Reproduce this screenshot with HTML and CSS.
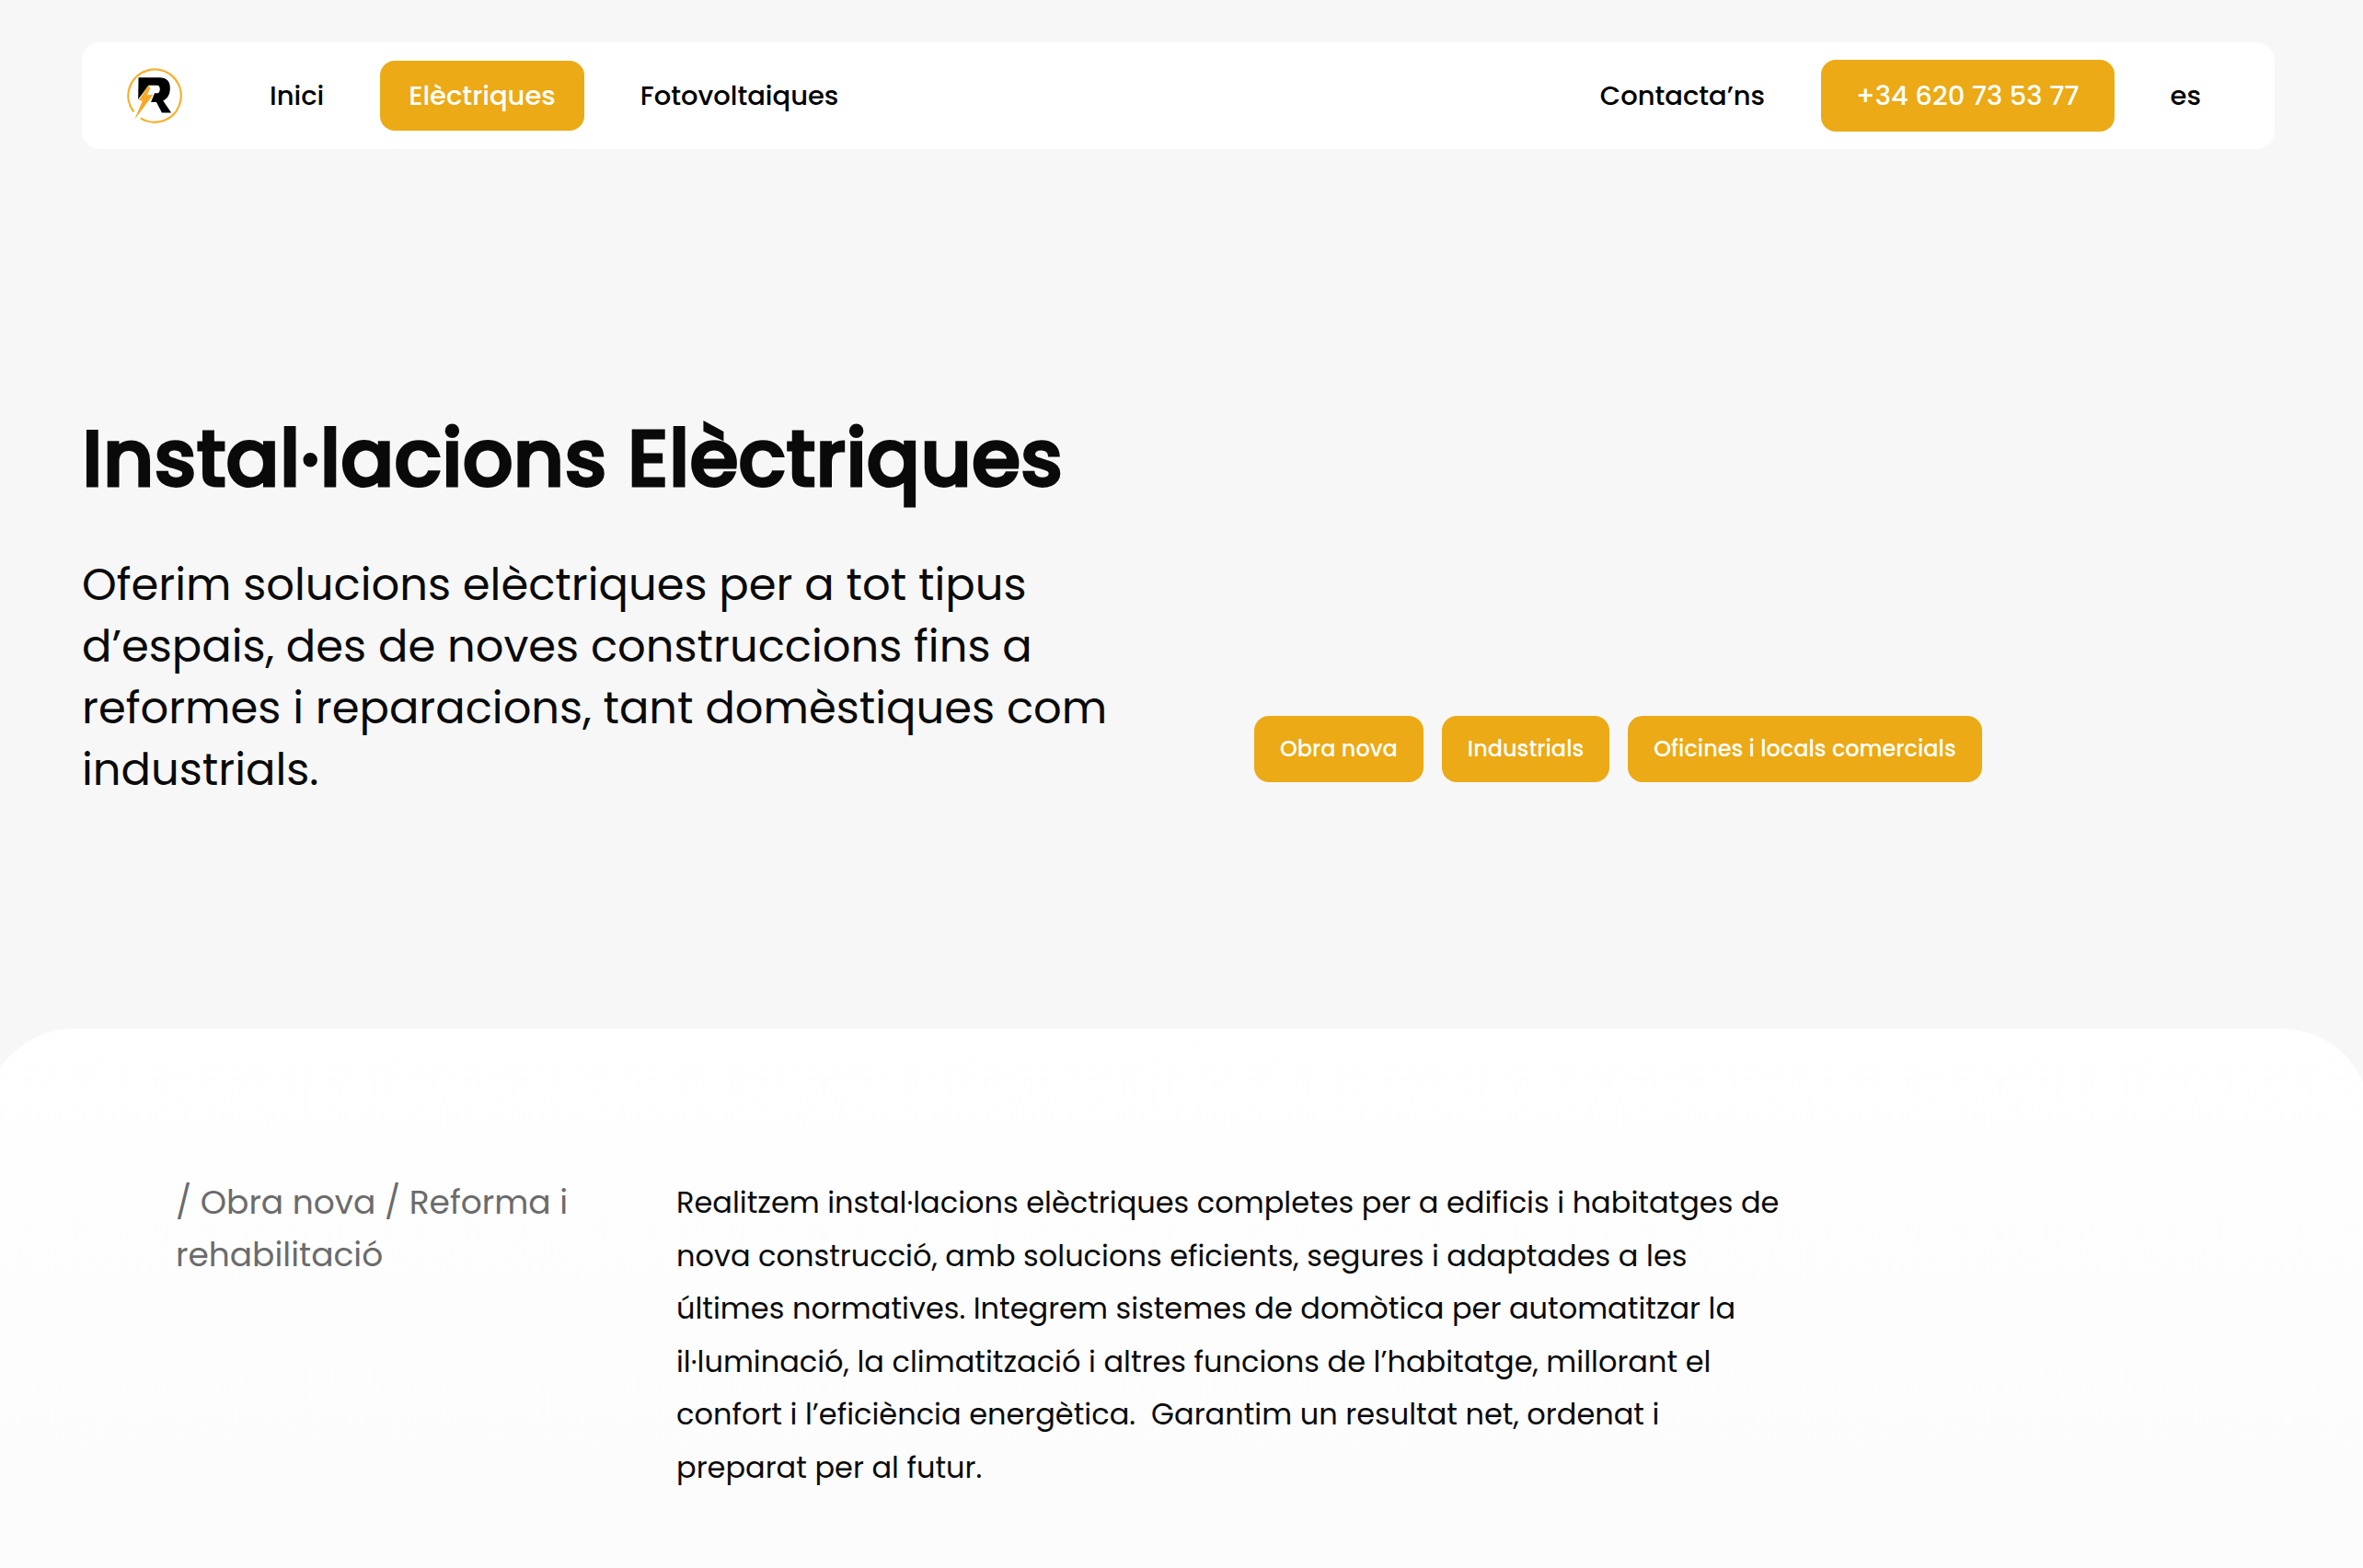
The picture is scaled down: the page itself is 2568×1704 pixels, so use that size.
FILE: index.html
```html
<!DOCTYPE html>
<html lang="ca">
<head>
  <meta charset="UTF-8">
  <meta name="viewport" content="width=device-width, initial-scale=1.0">
  <title>Instal·lacions Elèctriques</title>
  <link rel="stylesheet" href="styles.css">
</head>
<body>

<header class="navbar">
  <a class="logo" href="#" aria-label="Inici">
    <svg viewBox="50 38 188 188" aria-hidden="true">
      <path d="M75 185 A87 87 0 1 1 98 206" fill="none" stroke="#f9b02c" stroke-width="7"/>
      <path d="M91 72 H160 C184 72 195 84 195 106 C195 128 187 141 172 149 L199 188 H168 L150 153 H132 L144 124 H154 C163 124 166 98 152 98 H124 L90 144 Z" fill="#000"/>
      <path d="M124 98 L92 147 L104 149 L78 211 L139 129 L119 130 L130 108 Z" fill="#f9a825"/>
    </svg>
  </a>
  <nav class="nav-links">
    <a href="#">Inici</a>
    <a class="active" href="#">Elèctriques</a>
    <a href="#">Fotovoltaiques</a>
  </nav>
  <div class="nav-contact">
    <a href="#">Contacta’ns</a>
    <a class="phone" href="tel:+34620735377">+34 620 73 53 77</a>
    <a href="#">es</a>
  </div>
</header>

<main>
  <section class="hero">
    <div class="hero-text">
      <h1>Instal·lacions Elèctriques</h1>
      <p>Oferim solucions elèctriques per a tot tipus<br>
      d’espais, des de noves construccions fins a<br>
      reformes i reparacions, tant domèstiques com<br>
      industrials.</p>
    </div>
    <div class="tags">
      <a href="#">Obra nova</a>
      <a href="#">Industrials</a>
      <a href="#">Oficines i locals comercials</a>
    </div>
  </section>

  <section class="service">
    <h2>/ Obra nova / Reforma i<br>
    rehabilitació</h2>
    <p>Realitzem instal·lacions elèctriques completes per a edificis i habitatges de<br>
    nova construcció, amb solucions eficients, segures i adaptades a les<br>
    últimes normatives. Integrem sistemes de domòtica per automatitzar la<br>
    il·luminació, la climatització i altres funcions de l’habitatge, millorant el<br>
    confort i l’eficiència energètica.&nbsp; Garantim un resultat net, ordenat i<br>
    preparat per al futur.</p>
  </section>
</main>

</body>
</html>
```

FILE: styles.css
```css
* {
  box-sizing: border-box;
}

body {
  display: flex;
  flex-direction: column;
  min-height: 100vh;
  margin: 0;
  overflow-x: hidden;
  background-color: #f7f7f7;
  color: #0a0a0a;
  font-family: Poppins, Inter, sans-serif;
}

a {
  color: inherit;
  text-decoration: none;
}

h1, h2, p {
  margin: 0;
  white-space: nowrap;
}

/* Barra de navegació */
.navbar {
  display: flex;
  align-items: center;
  margin: 46px 96px 0 89px;
  padding: 19px 49px 19px 48px;
  border-radius: 20px;
  background-color: #ffffff;
  color: #000000;
  font-size: 29px;
  font-weight: 500;
  line-height: 44px;
}

.logo svg {
  display: block;
  width: 62px;
  height: 62px;
}

.nav-links, .nav-contact {
  display: flex;
  align-items: center;
}

.nav-links {
  margin-left: 63px;
}

.nav-contact {
  margin-left: auto;
}

.nav-links a, .nav-contact a {
  padding: 16px 31px;
  border-radius: 16px;
}

.nav-links .active, .nav-contact .phone {
  margin: 0 30px;
  background-color: #ebaa16;
  color: #ffffff;
}

.nav-contact .phone {
  padding: 17px 38px;
}

/* Capçalera */
.hero {
  display: grid;
  grid-template-columns: 1274px 1fr;
  align-items: end;
  padding: 278px 96px 248px 89px;
}

h1 {
  margin-bottom: 46px;
  font-size: 86px;
  font-weight: 500;
  line-height: 116px;
  -webkit-text-stroke: 3px #0a0a0a;
}

.hero p {
  font-size: 48px;
  line-height: 67px;
}

.tags {
  display: flex;
  gap: 20px;
  margin-bottom: 20px;
}

.tags a {
  padding: 18px 28px;
  border-radius: 16px;
  background-color: #ebaa16;
  color: #ffffff;
  font-size: 24px;
  font-weight: 500;
  line-height: 36px;
}

main {
  display: flex;
  flex-direction: column;
  flex: 1;
}

/* Servei */
.service {
  display: grid;
  grid-template-columns: 544px 1fr;
  flex: 1;
  margin: 0 -8px 0 -16px;
  padding: 160px 96px 64px 207px;
  border-radius: 96px 96px 0 0;
  background: linear-gradient(#ffffff, #fcfcfc 480px);
}

.service h2 {
  color: #6b6b6b;
  font-size: 36px;
  font-weight: 400;
  line-height: 57px;
}

.service p {
  font-size: 32px;
  line-height: 1.8;
}
```
